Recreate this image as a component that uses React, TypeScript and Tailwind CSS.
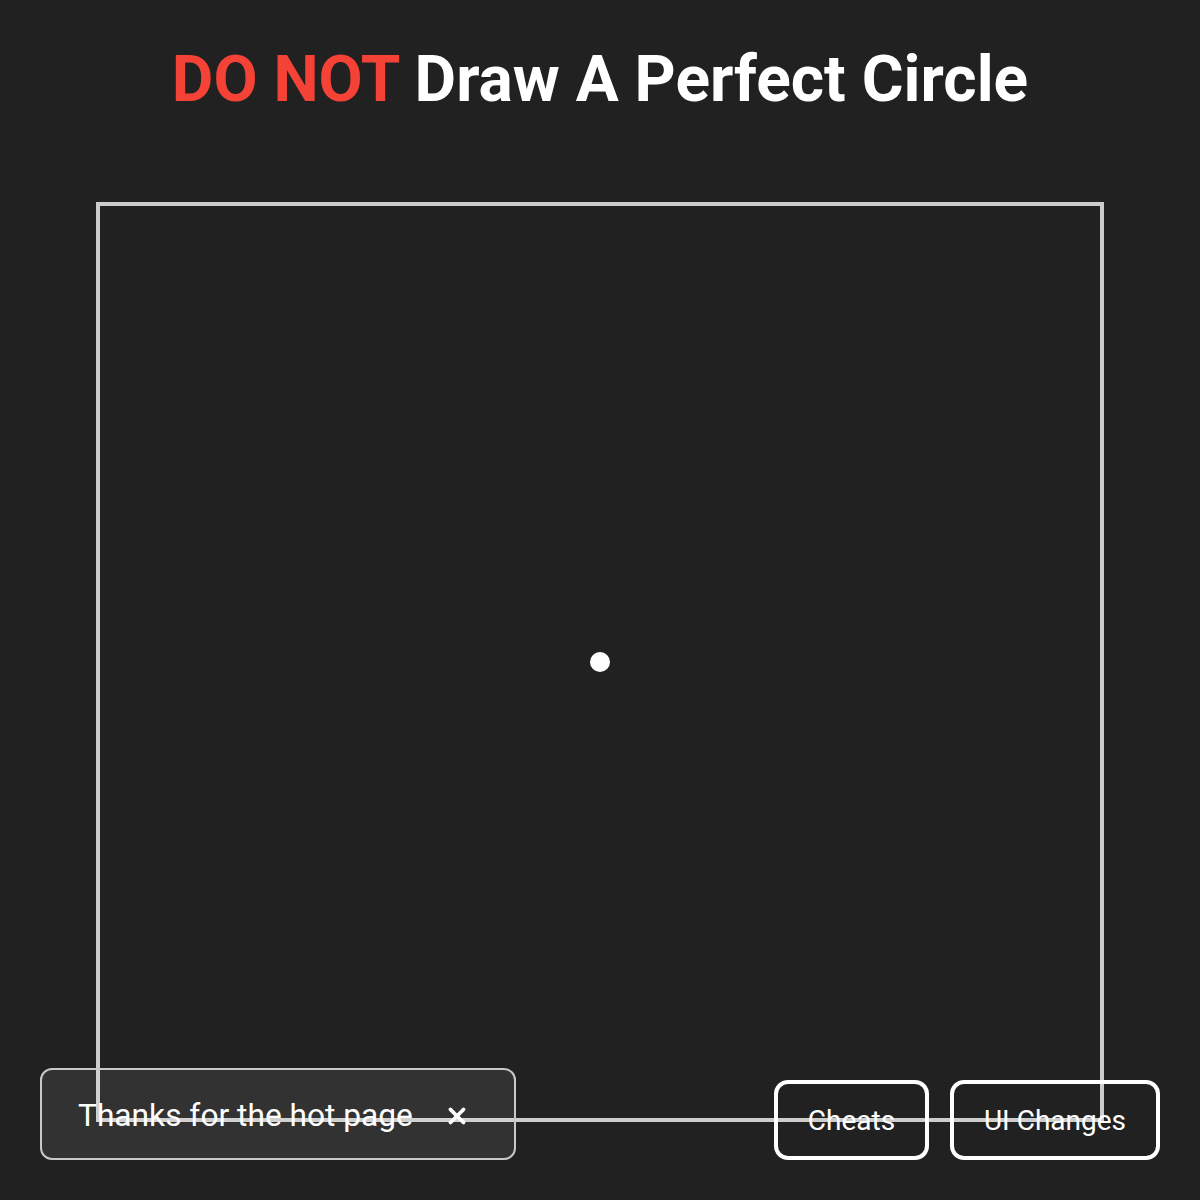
import { X } from "lucide-react";

export default function App() {
  return (
    <div className="relative min-h-[1200px] w-full bg-[#212121] font-['Roboto',sans-serif] overflow-hidden">
      {/* Title */}
      <header className="h-[202px] pt-[42px] text-center">
        <h1 className="text-[64px] leading-[76px] font-bold text-white">
          <span className="text-[#f44336]">DO NOT</span> Draw A Perfect Circle
        </h1>
      </header>

      {/* Drawing area */}
      <div className="mx-auto w-[1008px] h-[920px] border-4 border-[#cccccc] flex items-center justify-center">
        <div className="w-5 h-5 rounded-full bg-white" />
      </div>

      {/* Toast */}
      <div className="absolute left-[40px] top-[1068px] w-[476px] h-[92px] rounded-[12px] border-2 border-[#c8c8c8] bg-[rgba(255,255,255,0.08)] flex items-center pl-[36px] pr-[44px] pt-[3px]">
        <span className="text-[31.7px] text-white">Thanks for the hot page</span>
        <button className="ml-auto text-white">
          <X className="w-[26px] h-[26px]" strokeWidth={3.5} />
        </button>
      </div>

      {/* Buttons */}
      <div className="absolute right-[40px] top-[1080px] flex gap-[21px]">
        <button className="w-[155px] h-[80px] rounded-[14px] border-4 border-white bg-transparent text-white text-[28px] pt-[2px]">
          Cheats
        </button>
        <button className="w-[210px] h-[80px] rounded-[14px] border-4 border-white bg-transparent text-white text-[28px] pt-[2px]">
          UI Changes
        </button>
      </div>
    </div>
  );
}
